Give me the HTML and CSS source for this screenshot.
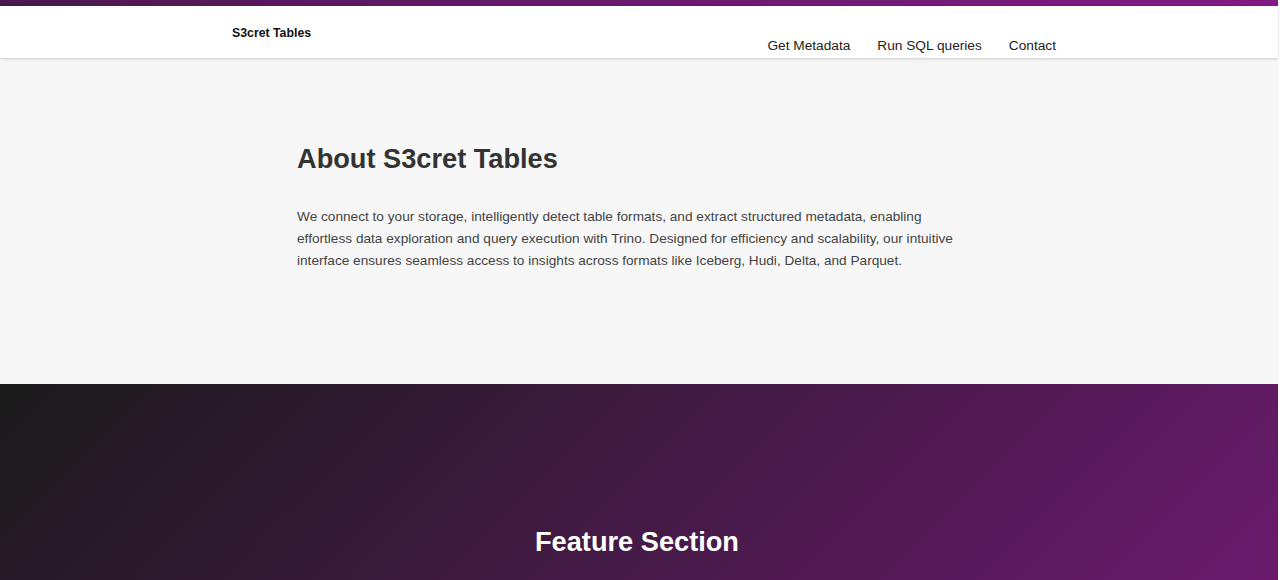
FILE: index.html
```html
<!DOCTYPE html>
<html lang="en">
<head>
<meta charset="utf-8">
<title>S3cret Tables</title>
<link rel="stylesheet" href="styles.css">
</head>
<body>
<div class="page">
  <div class="topbar"></div>
  <header class="header">
    <div class="header-inner">
      <div class="logo">S3cret Tables</div>
      <nav class="nav">
        <a href="#">Get Metadata</a>
        <a href="#">Run SQL queries</a>
        <a href="#">Contact</a>
      </nav>
    </div>
  </header>
  <section class="about">
    <div class="about-inner">
      <h2>About S3cret Tables</h2>
      <p>We connect to your storage, intelligently detect table formats, and extract structured metadata, enabling effortless data exploration and query execution with Trino. Designed for efficiency and scalability, our intuitive interface ensures seamless access to insights across formats like Iceberg, Hudi, Delta, and Parquet.</p>
    </div>
  </section>
  <section class="features">
    <h2>Feature Section</h2>
  </section>
</div>
</body>
</html>
```

FILE: styles.css
```css
* { box-sizing: border-box; }
html, body { margin: 0; padding: 0; }
body {
  font-family: "Liberation Sans", Arial, sans-serif;
  background: #ffffff;
  overflow: hidden;
}
.page {
  width: 1278px;
}
.topbar {
  height: 6px;
  background: linear-gradient(90deg, #4a184e 0%, #6a1a6e 50%, #811a86 100%);
}
.header {
  position: relative;
  z-index: 2;
  height: 52px;
  background: #ffffff;
  box-shadow: 0 1px 3px rgba(0, 0, 0, 0.18);
}
.header-inner {
  margin-left: 232px;
  width: 824px;
  display: flex;
  justify-content: space-between;
  align-items: flex-start;
}
.logo {
  font-size: 12.3px;
  font-weight: bold;
  color: #111;
  line-height: 14px;
  padding-top: 20px;
}
.nav {
  display: flex;
  gap: 27px;
  padding-top: 32px;
}
.nav a {
  font-size: 13.7px;
  line-height: 16px;
  color: #222;
  text-decoration: none;
}
.about {
  background: #f7f7f7;
  height: 326px;
  padding-top: 85px;
}
.about-inner {
  margin-left: 297px;
  width: 670px;
}
.about h2 {
  margin: 0;
  font-size: 27.2px;
  font-weight: bold;
  color: #333;
  line-height: 31px;
}
.about p {
  margin: 32px 0 0;
  font-size: 13.65px;
  line-height: 22px;
  color: #444;
}
.features {
  height: 600px;
  padding-top: 142px;
  background: linear-gradient(135deg, #1a1a1a 0%, #801a84 100%);
  text-align: center;
}
.features h2 {
  margin: 0 0 0 -4px;
  font-size: 27.2px;
  font-weight: bold;
  color: #ffffff;
  line-height: 31px;
}
```
